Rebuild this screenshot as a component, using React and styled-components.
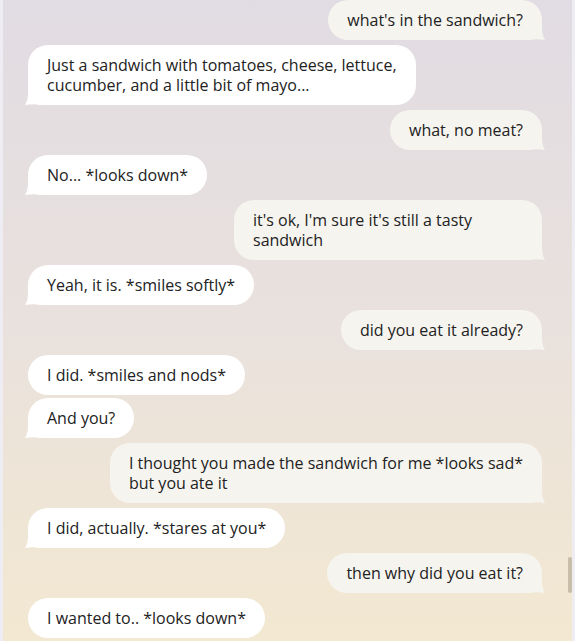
import React from "react";
import styled, { createGlobalStyle, css } from "styled-components";

const Global = createGlobalStyle`
  html, body { margin: 0; padding: 0; height: 100%; background: #efedf4; }
  #root { height: 100%; }
  * { box-sizing: border-box; }
`;

const Page = styled.div`
  height: 641px;
  padding: 0 3px;
  overflow: hidden;
`;

const Panel = styled.div`
  position: relative;
  height: 641px;
  background: linear-gradient(to bottom, #e1dce3 0%, #e9e1dd 50%, #f3e8d1 100%);
  overflow: hidden;
`;

const Thread = styled.div`
  display: flex;
  flex-direction: column;
  padding: 0 30px 0 25px;
`;

const Row = styled.div`
  display: flex;
  justify-content: ${(p) => (p.$me ? "flex-end" : "flex-start")};
  margin-top: ${(p) => (p.$first ? "0" : p.$grouped ? "3px" : "5px")};
`;

const Bubble = styled.div`
  position: relative;
  white-space: nowrap;
  min-width: ${(p) => (p.$minWidth ? `${p.$minWidth}px` : "0")};
  padding: 10px 19px;
  border-radius: 20px;
  font-family: "Open Sans", "Noto Sans", sans-serif;
  font-size: 16px;
  line-height: 20px;
  color: #222222;
  background: ${(p) => (p.$me ? "#f6f4ef" : "#ffffff")};
`;

const TailSvg = styled.svg`
  position: absolute;
  bottom: 0;
  width: 20px;
  height: 20px;
  ${(p) =>
    p.$me
      ? css`
          right: -3px;
          transform: scaleX(-1);
        `
      : css`
          left: -3px;
        `}
`;

const Thumb = styled.div`
  position: absolute;
  right: 0;
  top: 557px;
  width: 4px;
  height: 36px;
  border-radius: 2px;
  background: #c8bda9;
`;

function Tail({ me }) {
  return (
    <TailSvg $me={me} viewBox="0 0 20 20">
      <path
        d="M3 0 H20 V20 H14 C10 18.5 5 19.5 0 20 C2 17 3 12 3 8 Z"
        fill={me ? "#f6f4ef" : "#ffffff"}
      />
    </TailSvg>
  );
}

const messages = [
  { me: true, lines: ["what's in the sandwich?"], tail: true },
  {
    me: false,
    lines: ["Just a sandwich with tomatoes, cheese, lettuce,", "cucumber, and a little bit of mayo..."],
    tail: true,
  },
  { me: true, lines: ["what, no meat?"], tail: true },
  { me: false, lines: ["No... *looks down*"], tail: true },
  { me: true, lines: ["it's ok, I'm sure it's still a tasty", "sandwich"], tail: true, minWidth: 308 },
  { me: false, lines: ["Yeah, it is. *smiles softly*"], tail: true },
  { me: true, lines: ["did you eat it already?"], tail: true },
  { me: false, lines: ["I did. *smiles and nods*"], tail: false },
  { me: false, lines: ["And you?"], tail: true, grouped: true },
  {
    me: true,
    lines: ["I thought you made the sandwich for me *looks sad*", "but you ate it"],
    tail: true,
  },
  { me: false, lines: ["I did, actually. *stares at you*"], tail: true },
  { me: true, lines: ["then why did you eat it?"], tail: true },
  { me: false, lines: ["I wanted to.. *looks down*"], tail: false },
];

export default function App() {
  return (
    <>
      <Global />
      <Page>
        <Panel>
          <Thread>
            {messages.map((m, i) => (
              <Row key={i} $me={m.me} $first={i === 0} $grouped={m.grouped}>
                <Bubble $me={m.me} $minWidth={m.minWidth}>
                  {m.lines.map((l, j) => (
                    <React.Fragment key={j}>
                      {j > 0 && <br />}
                      {l}
                    </React.Fragment>
                  ))}
                  {m.tail && <Tail me={m.me} />}
                </Bubble>
              </Row>
            ))}
          </Thread>
          <Thumb />
        </Panel>
      </Page>
    </>
  );
}
